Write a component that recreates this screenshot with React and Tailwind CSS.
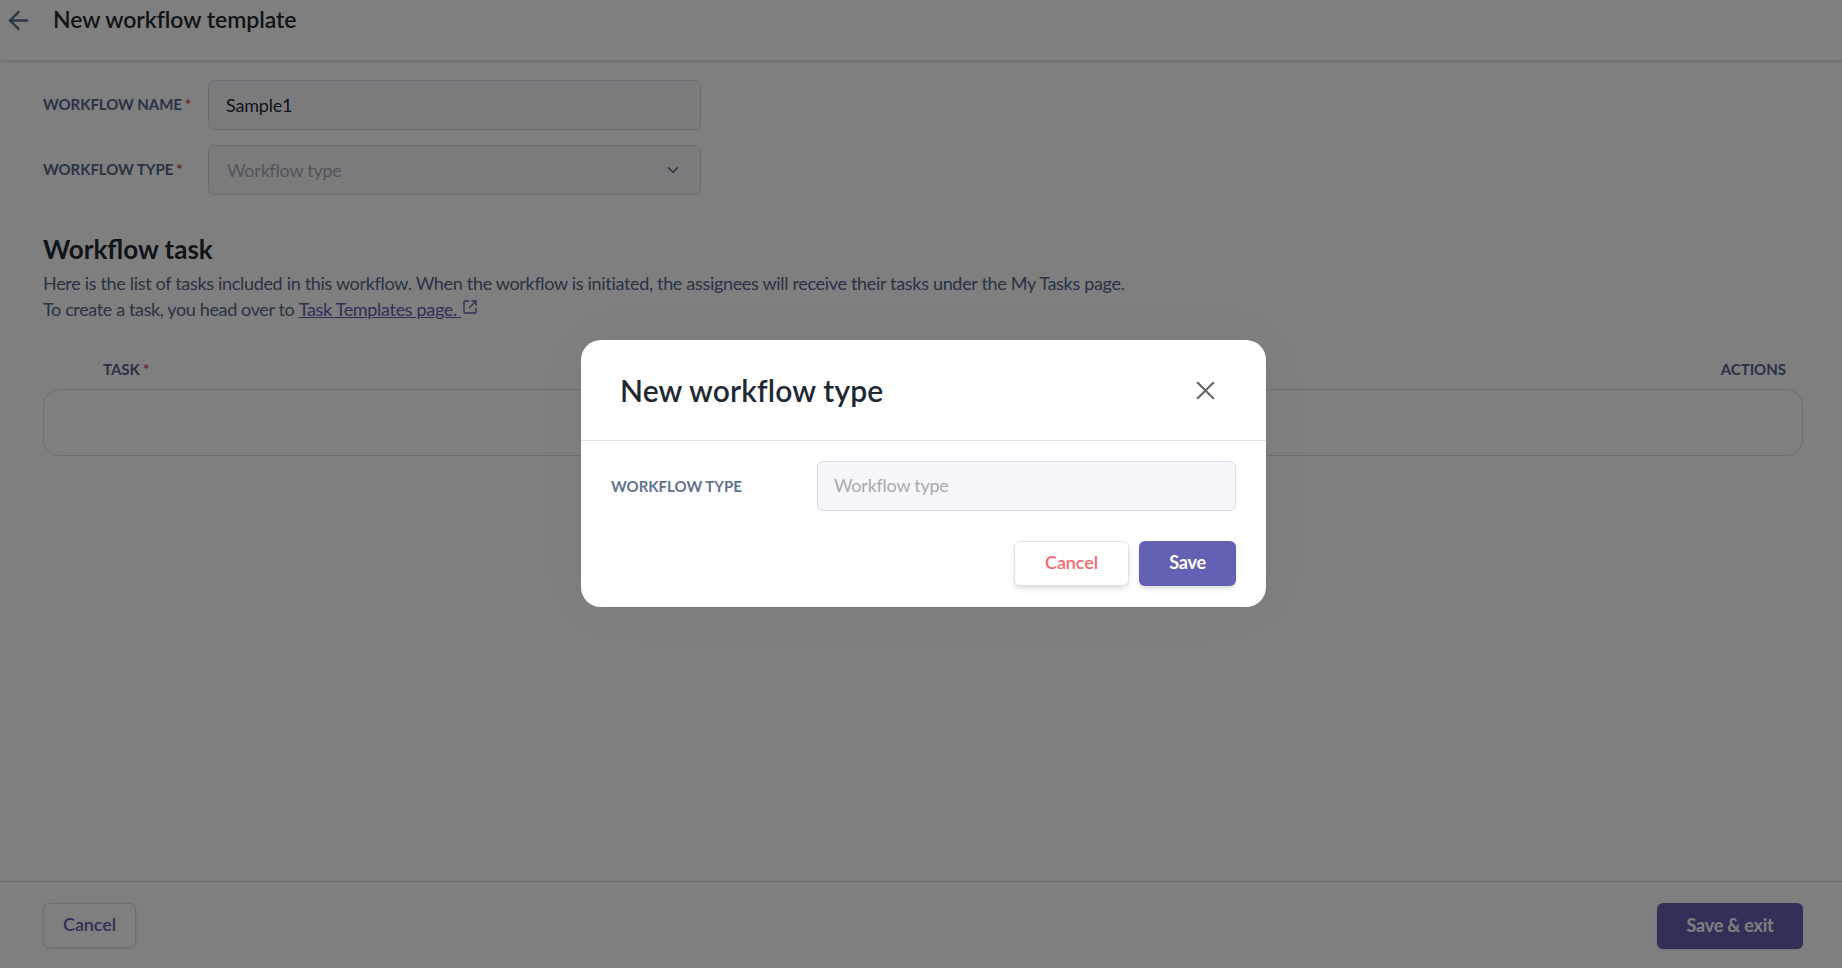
import React from "react";
import { ArrowLeft, ChevronDown, X } from "lucide-react";

const Required = () => <span className="ml-[3px] text-[#e5484d]">*</span>;

// box with a gap top right and an arrow through it
const OpenInNew = () => (
  <svg
    viewBox="0 0 14 14"
    width="14"
    height="14"
    fill="none"
    stroke="currentColor"
    strokeWidth="1.4"
    className="ml-[2px] inline-block -translate-y-[4px] text-[#5f5fb0]"
  >
    <path d="M6 1H2a1 1 0 0 0-1 1v10a1 1 0 0 0 1 1h10a1 1 0 0 0 1-1V8" />
    <path d="M8.5 1H13v4.5M13 1L6 8" />
  </svg>
);

// Dimmed page behind the dialog
const TemplatePage = () => (
  <div className="flex h-[968px] flex-col overflow-hidden bg-white">
    <header className="flex h-[61px] shrink-0 items-start border-b border-[#e8e8e8] pl-[4px] pt-[3px] shadow-sm">
      <ArrowLeft size={29} strokeWidth={2} className="mt-[3px] text-[#5a6b8c]" />
      <h1 className="ml-[20px] text-[23px] font-semibold leading-[32px] tracking-[-0.05px] text-[#1f2933]">
        New workflow template
      </h1>
    </header>

    <main className="flex-1 pl-[43px] pr-[39px] pt-[19px]">
      <div className="flex items-center">
        <label className="w-[165px] pb-[2px] text-[15px] font-bold tracking-[-0.05px] text-[#52668a]">
          WORKFLOW NAME
          <Required />
        </label>
        <div className="flex h-[50px] w-[493px] items-center rounded-md border border-[#d9dbe6] bg-[#f6f6fb] pl-[17px] text-[18px] tracking-[-0.2px] text-[#1f2933]">
          Sample1
        </div>
      </div>
      <div className="mt-[15px] flex items-center">
        <label className="w-[165px] pb-[2px] text-[15px] font-bold tracking-[-0.05px] text-[#52668a]">
          WORKFLOW TYPE
          <Required />
        </label>
        <div className="flex h-[50px] w-[493px] items-center justify-between rounded-md border border-[#d9dbe6] bg-[#f6f6fb] pl-[18px] pr-[18px] text-[18px] tracking-[-0.25px] text-[#a9a9b0]">
          Workflow type
          <ChevronDown size={18} className="text-[#52668a]" />
        </div>
      </div>

      <h2 className="mt-[36px] text-[26px] font-bold leading-[36px] text-[#1f2933]">
        Workflow task
      </h2>
      <p className="mt-[3px] text-[18px] leading-[26px] tracking-[-0.32px] text-[#52668a]">
        Here is the list of tasks included in this workflow. When the workflow is initiated, the
        assignees will receive their tasks under the My Tasks page.
        <br />
        <span className="tracking-[-0.37px]">To create a task, you head over to </span>
        <a className="text-[#5f5fb0] underline">Task Templates page. </a>
        <OpenInNew />
      </p>

      <div className="mt-[37px] flex justify-between pl-[60px] pr-[17px] text-[15px] font-bold leading-[20px] text-[#52668a]">
        <span>
          TASK
          <Required />
        </span>
        <span>ACTIONS</span>
      </div>
      <div className="mt-[10px] h-[67px] rounded-2xl border border-[#d9dbe6]" />
    </main>

    <footer className="flex h-[87px] shrink-0 items-start justify-between border-t border-[#d9dbe6] pl-[43px] pr-[39px] pt-[21px]">
      <button className="h-[45px] w-[93px] rounded-md border border-[#d9dbe6] pb-[2px] text-[18px] font-semibold tracking-[-0.1px] text-[#5f5fb0] shadow-sm">
        Cancel
      </button>
      <button className="h-[46px] w-[146px] rounded-md bg-[#6460b3] pb-[2px] text-[18px] font-bold tracking-[-0.2px] text-white shadow-sm">
        Save &amp; exit
      </button>
    </footer>
  </div>
);

const NewTypeDialog = () => (
  <div className="absolute inset-0 flex justify-center bg-black/50 pl-[5px] pt-[340px]">
    <div className="h-[267px] w-[685px] rounded-[20px] bg-white shadow-[0_0_60px_rgba(0,0,0,0.03)]">
      <div className="flex h-[101px] items-center justify-between border-b border-[#dde1e9] pl-[39px] pr-[45px]">
        <h3 className="text-[30px] font-semibold tracking-[0.15px] text-[#1f2933]">New workflow type</h3>
        <X size={31} strokeWidth={1.6} className="text-[#666]" />
      </div>
      <div className="flex items-center pl-[30px] pr-[30px] pt-[20px]">
        <label className="w-[206px] text-[15px] font-bold text-[#5f7391]">WORKFLOW TYPE</label>
        <div className="flex h-[50px] w-[419px] items-center rounded-md border border-[#d9dbe6] bg-[#f6f6fb] pb-[2px] pl-[16px] text-[18px] tracking-[-0.25px] text-[#a9a9b0]">
          Workflow type
        </div>
      </div>
      <div className="mt-[30px] flex justify-end gap-[10px] pr-[30px]">
        <button className="h-[45px] w-[115px] rounded-md border border-[#dde1e9] bg-white pb-[2px] text-[18px] font-semibold tracking-[-0.1px] text-[#f7686f] shadow-md">
          Cancel
        </button>
        <button className="h-[45px] w-[97px] rounded-md bg-[#6460b3] pb-[2px] text-[18px] font-bold tracking-[-0.2px] text-white shadow-md">
          Save
        </button>
      </div>
    </div>
  </div>
);

export default function App() {
  return (
    <div className="relative h-[968px] overflow-hidden font-['Lato',sans-serif]">
      <TemplatePage />
      <NewTypeDialog />
    </div>
  );
}
